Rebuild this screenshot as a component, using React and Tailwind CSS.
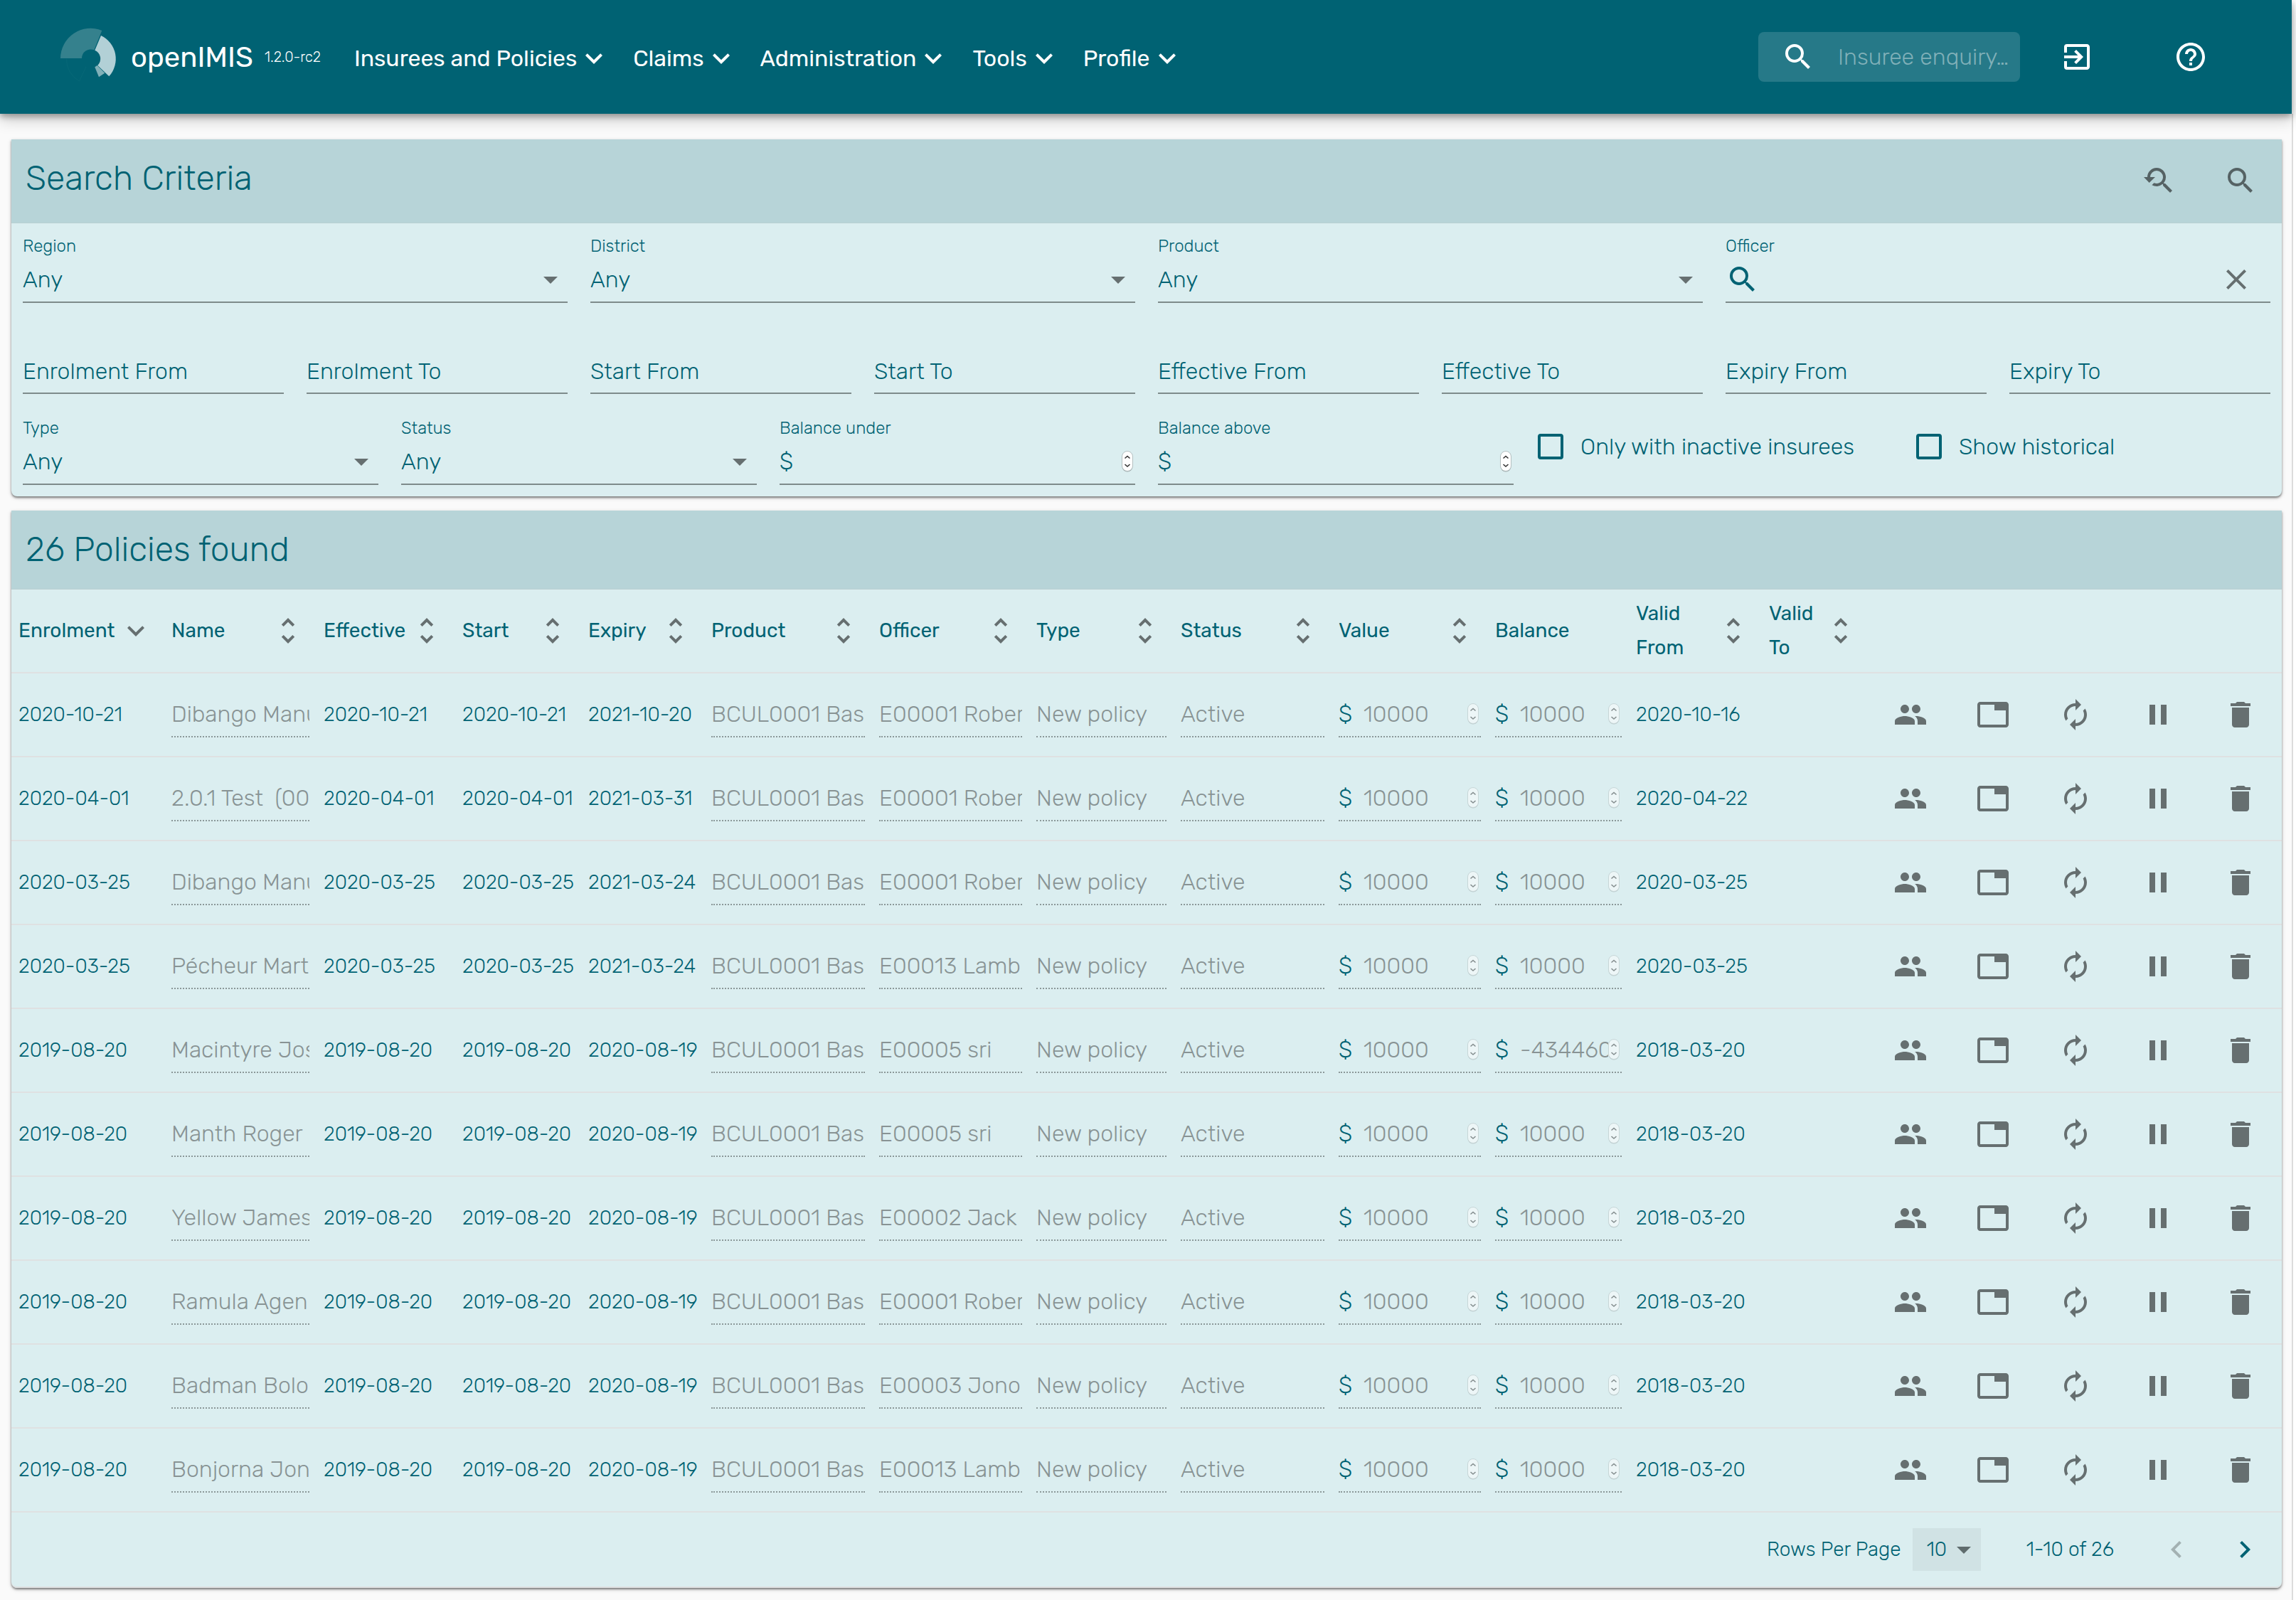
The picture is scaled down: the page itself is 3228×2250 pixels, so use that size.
import { useId } from "react";
import {
  MdSearch, MdExitToApp, MdHelpOutline, MdExpandMore, MdUnfoldMore, MdYoutubeSearchedFor,
  MdClear, MdArrowDropDown, MdPeople, MdTab, MdAutorenew, MdPause, MdDelete,
  MdChevronLeft, MdChevronRight,
} from "react-icons/md";

const MENUS = ["Insurees and Policies", "Claims", "Administration", "Tools", "Profile"];

const COLUMNS = [
  { name: "Enrolment", width: "w-[215px]", sort: "desc" },
  { name: "Name", width: "w-[214px]", sort: "both" },
  { name: "Effective", width: "w-[195px]", sort: "both" },
  { name: "Start", width: "w-[177px]", sort: "both" },
  { name: "Expiry", width: "w-[173px]", sort: "both" },
  { name: "Product", width: "w-[236px]", sort: "both" },
  { name: "Officer", width: "w-[221px]", sort: "both" },
  { name: "Type", width: "w-[203px]", sort: "both" },
  { name: "Status", width: "w-[222px]", sort: "both" },
  { name: "Value", width: "w-[220px]", sort: "both" },
  { name: "Balance", width: "w-[198px]" },
  { name: "Valid From", width: "w-[187px]", sort: "both" },
  { name: "Valid To", width: "w-[151px]", sort: "both" },
];

const ACTIONS = [
  ["Family", MdPeople],
  ["Open in new tab", MdTab],
  ["Renew", MdAutorenew],
  ["Suspend", MdPause],
  ["Delete", MdDelete],
];

const ROWS = [
  ["2020-10-21", "Dibango Manu", "2021-10-20", "E00001 Rober", "10000", "2020-10-16"],
  ["2020-04-01", "2.0.1 Test  (00", "2021-03-31", "E00001 Rober", "10000", "2020-04-22"],
  ["2020-03-25", "Dibango Manu", "2021-03-24", "E00001 Rober", "10000", "2020-03-25"],
  ["2020-03-25", "Pécheur Mart", "2021-03-24", "E00013 Lamb", "10000", "2020-03-25"],
  ["2019-08-20", "Macintyre Jos", "2020-08-19", "E00005 sri", "-434460", "2018-03-20"],
  ["2019-08-20", "Manth Roger", "2020-08-19", "E00005 sri", "10000", "2018-03-20"],
  ["2019-08-20", "Yellow James", "2020-08-19", "E00002 Jack", "10000", "2018-03-20"],
  ["2019-08-20", "Ramula Agen", "2020-08-19", "E00001 Rober", "10000", "2018-03-20"],
  ["2019-08-20", "Badman Bolo", "2020-08-19", "E00003 Jono", "10000", "2018-03-20"],
  ["2019-08-20", "Bonjorna Jon", "2020-08-19", "E00013 Lamb", "10000", "2018-03-20"],
];

function Logo() {
  return (
    <svg viewBox="84 40 80 80" className="size-20 shrink-0 overflow-visible" aria-hidden="true">
      <path d="M85 82 A42.300 42.300 0 0 1 143.300 43 L132.300 70.300 A12.600 12.600 0 0 0 115 82 Z" fill="#35818d" />
      <path d="M142 50 A36.300 36.300 0 0 1 153.300 107.300 L137.300 92 A13 13 0 0 0 133.300 70.700 Z" fill="#b2d0d6" />
      <path d="M133.300 94.300 L136.700 92 L147.300 102.700 L139 108.300 Z" fill="#80b0b8" />
      <path d="M93.500 83 A34 34 0 0 0 111.500 114 L121 94" fill="none" stroke="#0a6a79" strokeWidth="0.7" />
    </svg>
  );
}

function TopBar() {
  return (
    <header className="relative mr-0.5 flex h-40 items-center bg-[#006273] pr-[118px] pl-[84px] text-white shadow-[0_4px_8px_rgba(0,0,0,0.3),0_8px_20px_rgba(0,0,0,0.2)]">
      <a href="#home" className="flex items-center">
        <Logo />
        <span className="ml-5 pt-0.5 text-[40px] leading-[48px]">openIMIS</span>
        <span className="ml-4 text-[20px] leading-[48px] font-light">1.2.0-rc2</span>
      </a>
      <nav className="ml-[47px] flex items-center gap-[31px] pt-1">
        {MENUS.map((menu) => (
          <button key={menu} type="button" className="flex items-center text-[32px] leading-[48px]">
            {menu}
            <MdExpandMore className="size-12" />
          </button>
        ))}
      </nav>
      <label className="ml-auto flex h-[70px] w-[368px] items-center rounded-lg bg-[#267988] pl-8">
        <MdSearch className="size-12 shrink-0" />
        <input
          type="text"
          aria-label="Insuree enquiry"
          placeholder="Insuree enquiry…"
          className="ml-8 w-full min-w-0 text-[32px] leading-[48px] font-light placeholder:text-[#80b0b8] outline-none"
        />
      </label>
      <button type="button" aria-label="Log out" className="ml-14"><MdExitToApp className="size-12" /></button>
      <button type="button" aria-label="Help" className="ml-28"><MdHelpOutline className="size-12" /></button>
    </header>
  );
}

function Stepper({ dim }) {
  return (
    <svg viewBox="0 0 16 30" className={dim ? "mr-[3px] h-[30px] w-4 shrink-0 opacity-50" : "mr-[3px] h-[30px] w-4 shrink-0"} aria-hidden="true">
      <rect x="0.5" y="1.5" width="15" height="28" rx="7.5" fill="#9aa5a6" />
      <rect x="0.5" y="0.5" width="15" height="28" rx="7.5" fill="#fff" stroke="#b4bfc0" strokeWidth="1" />
      <path d="M4.500 10.500 L8 7.500 L11.500 10.500 M4.500 19 L8 22 L11.500 19" fill="none" stroke="#333" strokeWidth="1.6" />
    </svg>
  );
}

const labelStyle = "block h-8 truncate text-2xl leading-8";
const lineStyle = "flex h-16 items-center border-b-2 border-[#7e8b8b]";
const entryStyle = "w-full min-w-0 appearance-none text-[32px] leading-[38px] outline-none";

function SelectField({ label }) {
  const id = useId();
  return (
    <div className="p-4">
      <label htmlFor={id} className={labelStyle}>{label}</label>
      <div className={lineStyle}>
        <select id={id} className={entryStyle}><option>Any</option></select>
        <MdArrowDropDown className="pointer-events-none size-12 shrink-0 text-[#666f70]" />
      </div>
    </div>
  );
}

function OfficerField() {
  const id = useId();
  return (
    <div className="p-4">
      <label htmlFor={id} className={labelStyle}>Officer</label>
      <div className={lineStyle}>
        <MdSearch className="size-12 shrink-0" />
        <input id={id} type="text" className={entryStyle} />
        <button type="button" aria-label="Clear officer" className="mr-6 text-[#666f70]"><MdClear className="size-12" /></button>
      </div>
    </div>
  );
}

function DateField({ label }) {
  return (
    <div className="p-4 pt-12">
      <div className={lineStyle + " pt-0.5"}>
        <input type="text" aria-label={label} placeholder={label} className={entryStyle + " placeholder:text-[#006273] placeholder:opacity-100"} />
      </div>
    </div>
  );
}

function AmountField({ label }) {
  const id = useId();
  return (
    <div className="p-4">
      <label htmlFor={id} className={labelStyle}>{label}</label>
      <div className={lineStyle}>
        <span className="mr-4 text-[32px] leading-[38px]">$</span>
        <input id={id} type="text" inputMode="numeric" className={entryStyle} />
        <Stepper />
      </div>
    </div>
  );
}

function CheckField({ label }) {
  return (
    <div className="p-4 pl-[18px]">
      <label className="flex h-[84px] items-center text-[32px] leading-[48px]">
        <input type="checkbox" className="mr-6 size-9 shrink-0 appearance-none rounded-[4px] border-4 border-[#006273]" />
        {label}
      </label>
    </div>
  );
}

function Panel({ children }) {
  return (
    <section className="rounded-b-lg bg-[#dbeef0] shadow-[0_2px_3px_rgba(0,0,0,0.45),0_2px_6px_rgba(0,0,0,0.15)]">{children}</section>
  );
}

function SearchPanel() {
  return (
    <Panel>
      <div className="flex h-[118px] items-center border-b border-[#b9cfd1] bg-[#b7d4d8] pr-[34px] pb-0.5 pl-5">
        <h2 className="pb-1.5 text-5xl leading-[64px]">Search Criteria</h2>
        <button type="button" aria-label="Reset search" className="ml-auto text-[#556264]"><MdYoutubeSearchedFor className="size-12" /></button>
        <button type="button" aria-label="Search" className="ml-[68px] text-[#556264]"><MdSearch className="size-12" /></button>
      </div>
      <form>
        <div className="grid grid-cols-4">
          <SelectField label="Region" />
          <SelectField label="District" />
          <SelectField label="Product" />
          <OfficerField />
        </div>
        <div className="grid grid-cols-8">
          {["Enrolment From", "Enrolment To", "Start From", "Start To", "Effective From", "Effective To", "Expiry From", "Expiry To"].map((label) => (
            <DateField key={label} label={label} />
          ))}
        </div>
        <div className="grid grid-cols-6">
          <SelectField label="Type" />
          <SelectField label="Status" />
          <AmountField label="Balance under" />
          <AmountField label="Balance above" />
          <CheckField label="Only with inactive insurees" />
          <CheckField label="Show historical" />
        </div>
      </form>
    </Panel>
  );
}

function ReadOnly({ label, value, amount }) {
  return (
    <div className="flex h-16 items-center border-b-2 border-dotted border-[#8b9899]">
      {amount && <span className="mr-4 text-[32px] leading-[38px]">$</span>}
      <input disabled aria-label={label} value={value} className="w-full min-w-0 text-[32px] leading-[38px] text-[#889394]" />
      {amount && <Stepper dim />}
    </div>
  );
}

function PolicyTable() {
  return (
    <table className="w-full table-fixed text-left text-[28px] leading-[48px]">
      <thead>
        <tr className="h-[117px] border-b-2 border-[#dfe1e2]">
          {COLUMNS.map(({ name, width, sort }) => (
            <th key={name} scope="col" className={width + " px-2.5 font-normal"}>
              <div className="flex items-center justify-between">
                {name}
                {sort && (
                  <button type="button" aria-label={"Sort by " + name} className="mr-1.5 text-[#666f70]">
                    {sort === "desc" ? <MdExpandMore className="size-12" /> : <MdUnfoldMore className="size-12" />}
                  </button>
                )}
              </div>
            </th>
          ))}
          {ACTIONS.map(([name]) => (
            <th key={name} scope="col" aria-label={name} className="w-[116px]" />
          ))}
        </tr>
      </thead>
      <tbody>
        {ROWS.map(([start, name, expiry, officer, balance, valid], i) => (
          <tr key={i} className="h-[118px] border-b-2 border-[#dfe1e2]">
            <td className="px-2.5 whitespace-nowrap">{start}</td>
            <td className="px-2.5"><ReadOnly label="Name" value={name} /></td>
            <td className="px-2.5 whitespace-nowrap">{start}</td>
            <td className="px-2.5 whitespace-nowrap">{start}</td>
            <td className="px-2.5 whitespace-nowrap">{expiry}</td>
            <td className="px-2.5"><ReadOnly label="Product" value="BCUL0001 Bas" /></td>
            <td className="px-2.5"><ReadOnly label="Officer" value={officer} /></td>
            <td className="px-2.5"><ReadOnly label="Type" value="New policy" /></td>
            <td className="px-2.5"><ReadOnly label="Status" value="Active" /></td>
            <td className="px-2.5"><ReadOnly label="Value" value="10000" amount /></td>
            <td className="px-2.5"><ReadOnly label="Balance" value={balance} amount /></td>
            <td className="px-2.5 whitespace-nowrap">{valid}</td>
            <td />
            {ACTIONS.map(([action, Icon]) => (
              <td key={action}>
                <button type="button" aria-label={action} className="mx-auto block text-[#666f70]"><Icon className="size-12" /></button>
              </td>
            ))}
          </tr>
        ))}
      </tbody>
    </table>
  );
}

function Pagination() {
  return (
    <footer className="flex h-[106px] items-center justify-end rounded-b-lg border-b-2 border-[#dfe1e2] pr-7 text-[28px] leading-[48px]">
      <label htmlFor="page-size">Rows Per Page</label>
      <div className="ml-4 flex h-[60px] w-24 items-center bg-[#d0e2e4] pl-5">
        <select id="page-size" className="w-full min-w-0 appearance-none outline-none"><option>10</option></select>
        <MdArrowDropDown className="pointer-events-none size-12 shrink-0 text-[#5f6c6d]" />
      </div>
      <span className="ml-16">1-10 of 26</span>
      <button type="button" aria-label="Previous page" disabled className="ml-16 text-[#a3b1b2]"><MdChevronLeft className="size-12" /></button>
      <button type="button" aria-label="Next page" className="ml-12"><MdChevronRight className="size-12" /></button>
    </footer>
  );
}

export default function App() {
  return (
    <div className="flex min-h-screen flex-col bg-white pr-1 font-['Rubik','Roboto',sans-serif]">
      <TopBar />
      <main className="flex grow flex-col gap-5 border-r-2 border-[#dcdcdc] bg-[#fafafa] pt-9 pr-3.5 pb-4 pl-4 font-light text-[#006273]">
        <SearchPanel />
        <Panel>
          <h2 className="flex h-[111px] items-center border-b border-[#b9cfd1] bg-[#b7d4d8] pl-5 text-5xl leading-[64px]">26 Policies found</h2>
          <PolicyTable />
          <Pagination />
        </Panel>
      </main>
    </div>
  );
}
